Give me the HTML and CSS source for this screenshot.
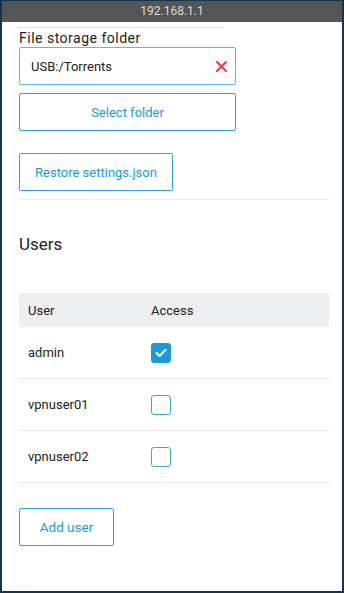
FILE: index.html
```html
<!DOCTYPE html>
<html>
<head>
<meta charset="utf-8">
<link rel="stylesheet" href="styles.css">
</head>
<body>
<div class="window">
  <div class="titlebar">192.168.1.1</div>
  <div class="content">
    <div class="topline"></div>
    <div class="label">File storage folder</div>
    <div class="input">
      <span class="input-text">USB:/Torrents</span>
      <svg class="clear" width="11" height="11" viewBox="0 0 11 11"><path d="M1 1L10 10M10 1L1 10" stroke="#e8394a" stroke-width="2" stroke-linecap="round"/></svg>
    </div>
    <button class="btn btn-wide">Select folder</button>
    <button class="btn btn-restore">Restore settings.json</button>
    <div class="divider"></div>
    <h2 class="heading">Users</h2>
    <div class="table">
      <div class="thead">
        <div class="col-user">User</div>
        <div class="col-access">Access</div>
      </div>
      <div class="row">
        <div class="col-user">admin</div>
        <div class="col-access"><span class="check checked"><svg width="12" height="10" viewBox="0 0 12 10"><path d="M1.5 5L4.5 8L10.5 2" fill="none" stroke="#fff" stroke-width="2" stroke-linecap="round" stroke-linejoin="round"/></svg></span></div>
      </div>
      <div class="row">
        <div class="col-user">vpnuser01</div>
        <div class="col-access"><span class="check"></span></div>
      </div>
      <div class="row">
        <div class="col-user">vpnuser02</div>
        <div class="col-access"><span class="check"></span></div>
      </div>
    </div>
    <button class="btn btn-add">Add user</button>
  </div>
</div>
</body>
</html>
```
FILE: styles.css
```css
* { box-sizing: border-box; }
html, body { margin: 0; padding: 0; }
body {
  background: #15354f;
  font-family: Roboto, "Liberation Sans", sans-serif;
  color: #222;
}
.window {
  margin: 1px 2px 0 2px;
  width: 340px;
  height: 590px;
  background: #fff;
  display: flex;
  flex-direction: column;
}
.titlebar {
  height: 21px;
  background: #555555;
  color: #dcdcdc;
  font-size: 12px;
  line-height: 21px;
  text-align: center;
}
.content {
  padding: 5px 12px 0 17px;
  display: flex;
  flex-direction: column;
  align-items: flex-start;
}
.topline {
  width: 205px;
  height: 1px;
  background: #d3e7ef;
  margin-left: -1px;
}
.label {
  font-size: 14px;
  letter-spacing: 0.5px;
  line-height: 18px;
  margin-top: 1px;
  color: #222;
}
.input {
  width: 217px;
  height: 38px;
  border: 1px solid #5cb9e6;
  border-radius: 2px;
  display: flex;
  align-items: center;
  justify-content: space-between;
  padding: 0 8px 0 11px;
}
.input-text { font-size: 13px; color: #222; }
.clear { display: block; }
.btn {
  font-family: Roboto, "Liberation Sans", sans-serif;
  background: #fff;
  border: 1px solid #2ca4df;
  border-radius: 2px;
  color: #1a9ad6;
  font-size: 13px;
  height: 38px;
  padding: 0;
  cursor: pointer;
}
.btn-wide { width: 217px; margin-top: 8px; }
.btn-restore { width: 154px; margin-top: 22px; }
.divider {
  width: 310px;
  height: 1px;
  background: #ececec;
  margin-top: 8px;
}
.heading {
  font-size: 17px;
  font-weight: 400;
  margin: 33px 0 0 0;
  line-height: 22px;
}
.table {
  width: 310px;
  margin-top: 38px;
}
.thead {
  display: flex;
  align-items: center;
  height: 34px;
  background: #eeeff1;
  font-size: 13px;
}
.row {
  display: flex;
  align-items: center;
  height: 52px;
  border-bottom: 1px solid #e8e8e8;
  font-size: 13px;
}
.col-user { width: 132px; padding-left: 9px; }
.col-access { flex: 1; display: flex; align-items: center; }
.check {
  width: 20px;
  height: 20px;
  border: 1.5px solid #3aa5de;
  border-radius: 3px;
  display: flex;
  align-items: center;
  justify-content: center;
}
.check.checked {
  background: #1a9ad6;
  border-color: #1a9ad6;
}
.btn-add { width: 95px; margin-top: 25px; font-size: 13.5px; }
```
